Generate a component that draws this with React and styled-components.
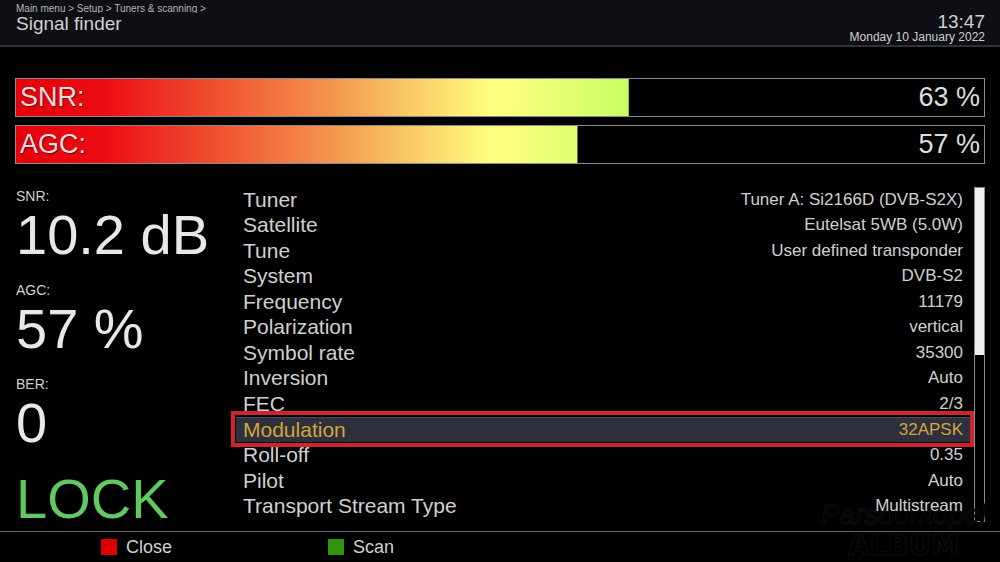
import React, {useState} from 'react';
import styled, {createGlobalStyle, css} from 'styled-components';

const meters = [
  {id: 'snr', label: 'SNR:', text: '63 %', level: 63.3},
  {id: 'agc', label: 'AGC:', text: '57 %', level: 58},
];

const readings = [
  {label: 'SNR:', value: '10.2 dB'},
  {label: 'AGC:', value: '57 %'},
  {label: 'BER:', value: '0'},
];

const settings = [
  {name: 'Tuner', value: 'Tuner A: Si2166D (DVB-S2X)'},
  {name: 'Satellite', value: 'Eutelsat 5WB (5.0W)'},
  {name: 'Tune', value: 'User defined transponder'},
  {name: 'System', value: 'DVB-S2'},
  {name: 'Frequency', value: '11179'},
  {name: 'Polarization', value: 'vertical'},
  {name: 'Symbol rate', value: '35300'},
  {name: 'Inversion', value: 'Auto'},
  {name: 'FEC', value: '2/3'},
  {name: 'Modulation', value: '32APSK'},
  {name: 'Roll-off', value: '0.35'},
  {name: 'Pilot', value: 'Auto'},
  {name: 'Transport Stream Type', value: 'Multistream'},
];

function App() {
  const [selected, setSelected] = useState('Modulation');

  return (
    <ScPage>
      <GlobalStyle />
      <ScWatermark>
        <ScScript>Parsdontopel</ScScript>
        <ScAlbum>ALBUM</ScAlbum>
      </ScWatermark>

      <ScHeader>
        <div>
          <ScPath>Main menu &gt; Setup &gt; Tuners &amp; scanning &gt;</ScPath>
          <ScTitle>Signal finder</ScTitle>
        </div>
        <ScClock>
          <ScTime>13:47</ScTime>
          <ScDate>Monday 10 January 2022</ScDate>
        </ScClock>
      </ScHeader>

      <ScMeters>
        {meters.map(meter => (
          <ScMeter key={meter.id}>
            <ScFill style={{clipPath: `inset(0 ${100 - meter.level}% 0 0)`}} />
            <ScMeterText>{meter.label}</ScMeterText>
            <ScMeterText>{meter.text}</ScMeterText>
          </ScMeter>
        ))}
      </ScMeters>

      <ScMain>
        <ScReadings>
          {readings.map(item => (
            <ScReading key={item.label}>
              <ScReadingLabel>{item.label}</ScReadingLabel>
              <ScReadingValue>{item.value}</ScReadingValue>
            </ScReading>
          ))}
          <ScReadingValue $locked>LOCK</ScReadingValue>
        </ScReadings>
        <ScList>
          {settings.map(item => (
            <ScRow
              key={item.name}
              $selected={item.name === selected}
              onClick={() => setSelected(item.name)}>
              <ScName>{item.name}</ScName>
              <ScValue>{item.value}</ScValue>
            </ScRow>
          ))}
        </ScList>
        <ScScroll>
          <ScThumb />
        </ScScroll>
      </ScMain>

      <ScFooter>
        <ScKey>
          <ScKeyColor $color="#dc0000" />
          Close
        </ScKey>
        <ScKey>
          <ScKeyColor $color="#31920e" />
          Scan
        </ScKey>
      </ScFooter>
    </ScPage>
  );
}

const GlobalStyle = createGlobalStyle`
  * {
    box-sizing: border-box;
  }

  body {
    margin: 0;
    background: #000;
    color: #d0d0d0;
    font-family: 'Liberation Sans', Arial, sans-serif;
  }
`;

const ScPage = styled.div`
  position: relative;
  display: flex;
  flex-direction: column;
  min-height: 100vh;
`;

const ScHeader = styled.header`
  display: flex;
  justify-content: space-between;
  height: 47px;
  padding: 3px 15px 0 16px;
  background: #0e0f14;
  border-bottom: 2px solid #313236;
`;

const ScPath = styled.nav`
  height: 10px;
  overflow: hidden;
  color: #b4b4b4;
  font-size: 10px;
  line-height: 12px;
`;

const ScTitle = styled.h1`
  margin: 0;
  font-size: 19px;
  font-weight: normal;
  line-height: 21px;
`;

const ScClock = styled.div`
  padding-top: 10px;
  text-align: right;
`;

const ScTime = styled.div`
  font-size: 19px;
  line-height: 18px;
`;

const ScDate = styled.div`
  font-size: 12px;
  line-height: 12px;
`;

const ScMeters = styled.section`
  display: flex;
  flex-direction: column;
  gap: 8px;
  padding: 31px 15px 23px;
`;

const ScMeter = styled.div`
  position: relative;
  display: flex;
  align-items: center;
  justify-content: space-between;
  height: 39px;
  padding: 0 4px;
  border: 1px solid #8c8c8c;
`;

const ScFill = styled.div`
  position: absolute;
  inset: 0;
  background: linear-gradient(
    90deg,
    #e6000a 0%,
    #ec0c14 9%,
    #f4984e 33%,
    #ffff80 49%,
    #fbff80 51%,
    #c4ff60 64%,
    #00ff00 100%
  );
`;

const ScMeterText = styled.span`
  position: relative;
  color: #dedede;
  font-size: 27px;
  line-height: 37px;
  text-shadow: 1px 1px 1px #0008;
`;

const ScMain = styled.main`
  display: flex;
  flex: 1;
  padding: 0 15px 0 16px;
`;

const ScReadings = styled.section`
  display: flex;
  flex-direction: column;
  gap: 16px;
  width: 220px;
`;

const ScReading = styled.div`
  line-height: 18px;
`;

const ScReadingLabel = styled.div`
  font-size: 14px;
`;

const ScReadingValue = styled.div`
  color: ${props => (props.$locked ? '#62c962' : '#e8e8e8')};
  font-size: 56px;
  line-height: 60px;
`;

const ScList = styled.div`
  display: flex;
  flex: 1;
  flex-direction: column;
  padding-bottom: 12px;
`;

const ScRow = styled.div`
  position: relative;
  display: flex;
  flex: 1;
  align-items: center;
  justify-content: space-between;
  padding: 0 7px;
  line-height: 24px;

  ${props =>
    props.$selected &&
    css`
      background: #2f303e;
      color: #cda63c;
      box-shadow: inset 0 1px #4b4c55;

      /* red frame lies over the neighbouring rows */
      &::after {
        content: '';
        position: absolute;
        z-index: 1;
        inset: -6px -4px -5px -5px;
        border: 4px solid #d0242c;
      }
    `}
`;

const ScName = styled.span`
  font-size: 21px;
`;

const ScValue = styled.span`
  font-size: 17px;
`;

const ScScroll = styled.div`
  width: 11px;
  margin: 0 0 9px 4px;
  border: 1px solid #8c8c8c;
`;

const ScThumb = styled.div`
  height: 50%;
  background: #efefef;
`;

const ScFooter = styled.footer`
  display: grid;
  grid-template-columns: 227px 227px;
  height: 31px;
  padding-left: 101px;
  border-top: 1px solid #66666a;
`;

const ScKey = styled.button`
  display: flex;
  align-items: center;
  gap: 9px;
  padding: 0;
  border: 0;
  background: none;
  color: inherit;
  font: 18px 'Liberation Sans', Arial, sans-serif;
`;

const ScKeyColor = styled.span`
  width: 16px;
  height: 16px;
  background: ${props => props.$color};
`;

const ScWatermark = styled.div`
  position: absolute;
  right: 14px;
  bottom: 0;
  color: #000;
  text-align: center;
  pointer-events: none;
  -webkit-text-stroke: 1px #0f0f0f;
`;

const ScScript = styled.div`
  font-size: 28px;
  font-style: italic;
  line-height: 28px;
`;

const ScAlbum = styled.div`
  font-family: 'DejaVu Sans', sans-serif;
  font-size: 28px;
  font-weight: bold;
  line-height: 33px;
`;

export default App;
